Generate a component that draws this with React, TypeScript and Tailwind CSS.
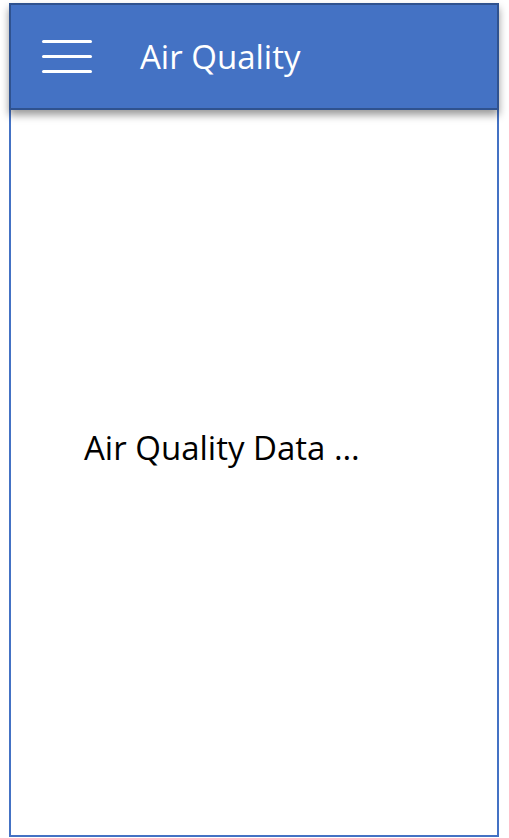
import React from "react";

export default function App() {
  return (
    <div className="w-[509px] h-[838px] bg-white overflow-hidden" style={{ fontFamily: '"Open Sans", "Noto Sans", sans-serif' }}>
      <div className="ml-[9px] mt-[3px] w-[490px] flex flex-col">
        <header className="relative z-10 h-[107px] bg-[#4472c4] border-2 border-[#2f528f] shadow-[0_5px_8px_rgba(0,0,0,0.4)] flex items-center pl-[31px] pb-[1px]">
          <div className="flex flex-col gap-[12px] w-[50px]">
            <div className="h-[3px] bg-white rounded-full" />
            <div className="h-[3px] bg-white rounded-full" />
            <div className="h-[3px] bg-white rounded-full" />
          </div>
          <span className="ml-[48px] text-[33px] leading-[33px] text-white">Air Quality</span>
        </header>
        <main className="h-[727px] border-x-2 border-b-2 border-[#4472c4] pt-[321px] pl-[73px]">
          <p className="text-[33px] leading-[33px] text-black">Air Quality Data …</p>
        </main>
      </div>
    </div>
  );
}
